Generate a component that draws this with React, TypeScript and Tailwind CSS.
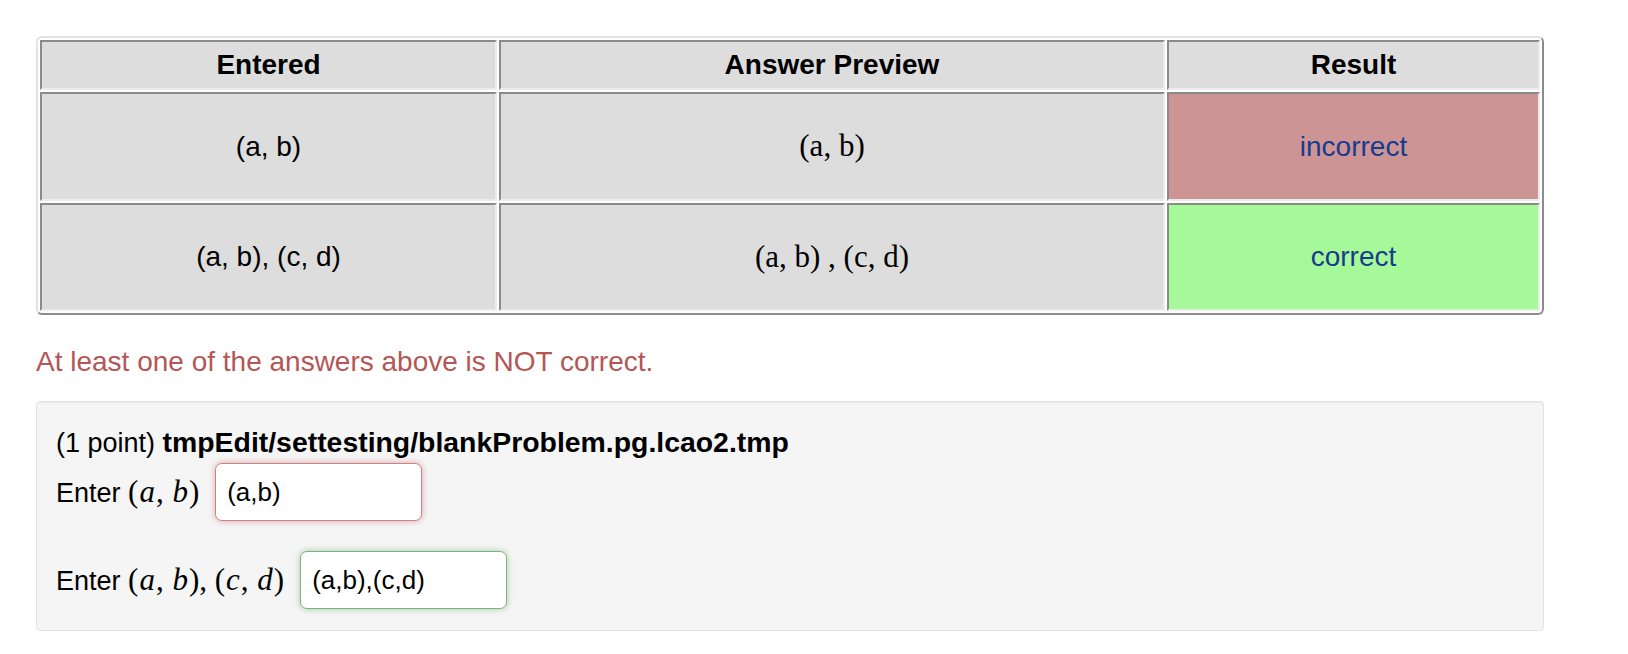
import React from 'react';

function MathLabel({ parts }: { parts: string[] }) {
  // single letters are italic variables, the rest is upright
  return (
    <span className="font-['Liberation_Serif',serif] text-[31px]">
      {parts.map((p, i) =>
        /^[a-d]$/.test(p) ? (
          <i key={i} className="px-[1px]">
            {p}
          </i>
        ) : (
          <span key={i}>{p}</span>
        ),
      )}
    </span>
  );
}

function AnswerInput({ value, ok }: { value: string; ok: boolean }) {
  return (
    <input
      readOnly
      value={value}
      className={
        ok
          ? 'h-[58px] w-[207px] rounded-[7px] border border-[#7fb47f] bg-white px-[11px] text-[26px] text-black shadow-[0_0_6px_rgba(90,170,90,0.55)] outline-none'
          : 'h-[58px] w-[207px] rounded-[7px] border border-[#c98484] bg-white px-[11px] text-[26px] text-black shadow-[0_0_6px_rgba(200,100,100,0.55)] outline-none'
      }
    />
  );
}

const cell =
  'border-2 border-t-[#8a8a8a] border-l-[#8a8a8a] border-b-[#ececec] border-r-[#ececec] bg-[#dddddd] text-center align-middle';

export default function App() {
  return (
    <div className="min-h-screen bg-white pl-[36px] pt-[36px] font-['Liberation_Sans',Arial,sans-serif] text-black">
      <table className="w-[1508px] table-fixed border-separate border-spacing-[2px] rounded-[6px] border-2 border-t-[#e2e2e2] border-l-[#e2e2e2] border-b-[#8c8c8c] border-r-[#8c8c8c] text-[28px]">
        <colgroup>
          <col className="w-[457px]" />
          <col className="w-[666px]" />
          <col />
        </colgroup>
        <thead>
          <tr className="h-[50px]">
            <th className={`${cell} font-bold`}>Entered</th>
            <th className={`${cell} font-bold`}>Answer Preview</th>
            <th className={`${cell} font-bold`}>Result</th>
          </tr>
        </thead>
        <tbody>
          <tr className="h-[109px]">
            <td className={cell}>(a, b)</td>
            <td className={`${cell} font-['Liberation_Serif',serif] text-[31px]`}>(a, b)</td>
            <td className="border-2 border-t-[#8a8a8a] border-l-[#8a8a8a] border-b-[#ececec] border-r-[#ececec] bg-[#cc9494] text-center align-middle text-[#173b8c]">
              incorrect
            </td>
          </tr>
          <tr className="h-[108px]">
            <td className={cell}>(a, b), (c, d)</td>
            <td className={`${cell} font-['Liberation_Serif',serif] text-[31px]`}>(a, b) , (c, d)</td>
            <td className="border-2 border-t-[#8a8a8a] border-l-[#8a8a8a] border-b-[#ececec] border-r-[#ececec] bg-[#a6f998] text-center align-middle text-[#173b8c]">
              correct
            </td>
          </tr>
        </tbody>
      </table>

      <div className="mt-[31px] text-[28px] leading-[32px] text-[#b55656]">
        At least one of the answers above is NOT correct.
      </div>

      <div className="mt-[23px] w-[1508px] rounded-[4px] border border-[#e3e3e3] bg-[#f5f5f5] px-[19px] pb-[21px] pt-[24px] text-[27px] shadow-[inset_0_1px_1px_rgba(0,0,0,0.05)]">
        <div className="leading-[32px]">
          (1 point) <b className="text-[28.4px]">tmpEdit/settesting/blankProblem.pg.lcao2.tmp</b>
        </div>
        <div className="mt-[4px] flex h-[58px] items-center gap-[16px]">
          <span>
            Enter <MathLabel parts={['(', 'a', ', ', 'b', ')']} />
          </span>
          <AnswerInput value="(a,b)" ok={false} />
        </div>
        <div className="mt-[30px] flex h-[58px] items-center gap-[16px]">
          <span>
            Enter <MathLabel parts={['(', 'a', ', ', 'b', '), (', 'c', ', ', 'd', ')']} />
          </span>
          <AnswerInput value="(a,b),(c,d)" ok />
        </div>
      </div>
    </div>
  );
}
